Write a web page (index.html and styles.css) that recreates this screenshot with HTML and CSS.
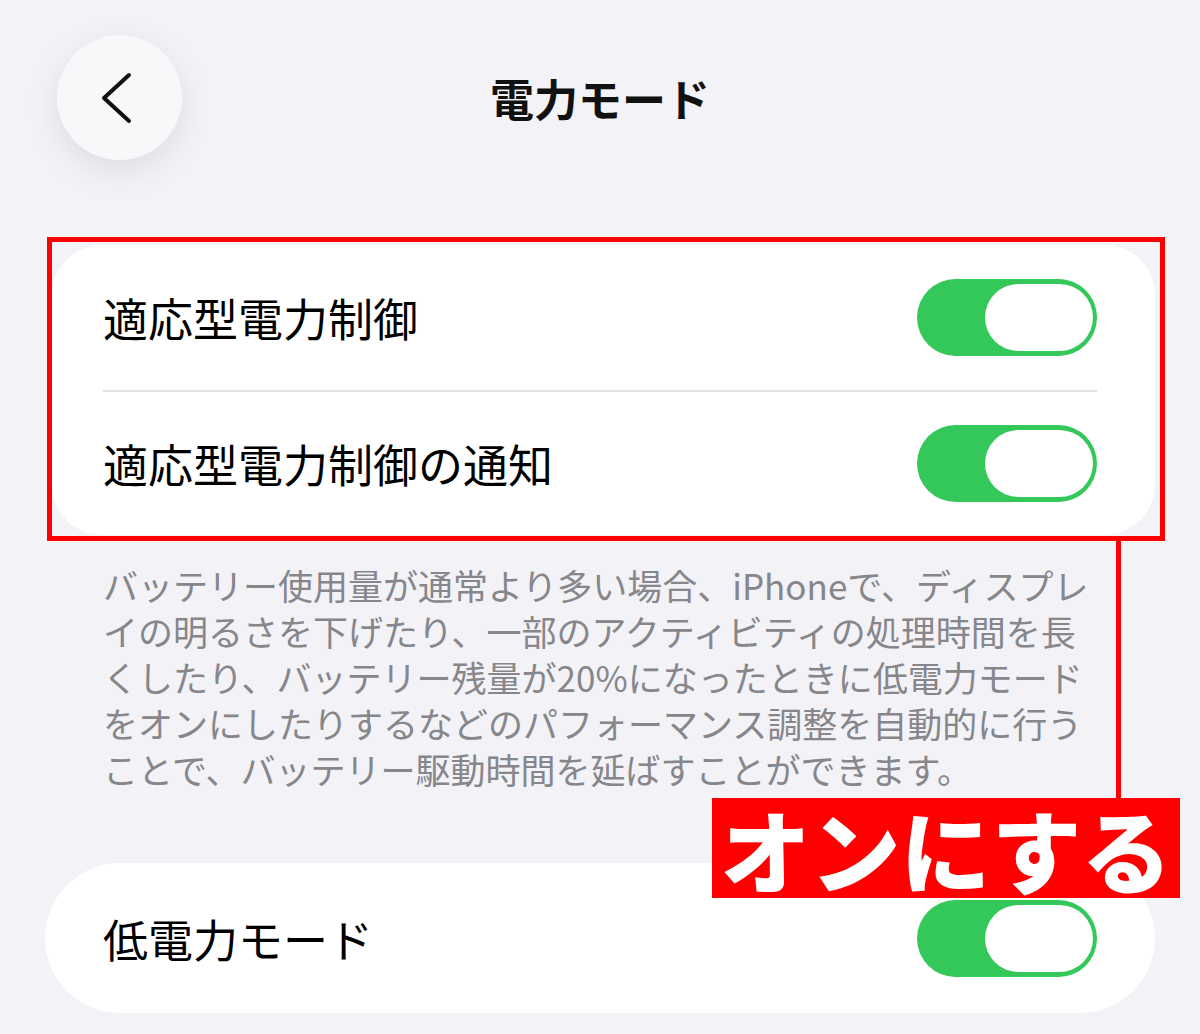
FILE: index.html
```html
<!DOCTYPE html>
<html lang="ja">
<head>
    <meta charset="UTF-8">
    <meta name="viewport" content="width=device-width, initial-scale=1.0">
    <title>電力モード</title>
    <link rel="stylesheet" href="styles.css">
</head>
<body>
    <header class="nav">
        <button class="back" aria-label="戻る">
            <svg width="40" height="52" viewBox="0 0 40 52">
                <path d="M33 3 L8 26 L33 49" fill="none" stroke="#111" stroke-width="4" stroke-linecap="round" stroke-linejoin="round"/>
            </svg>
        </button>
        <h1 class="title">電力モード</h1>
        <div></div>
    </header>

    <!-- highlighted group -->
    <div class="highlight">
        <div class="card">
            <div class="row">
                <span class="label">適応型電力制御</span>
                <span class="toggle on"><span class="knob"></span></span>
            </div>
            <div class="row">
                <span class="label">適応型電力制御の通知</span>
                <span class="toggle on"><span class="knob"></span></span>
            </div>
        </div>
    </div>

    <p class="footnote">
        バッテリー使用量が通常より多い場合、iPhoneで、ディスプレ<br>
        イの明るさを下げたり、一部のアクティビティの処理時間を長<br>
        くしたり、バッテリー残量が20%になったときに低電力モード<br>
        をオンにしたりするなどのパフォーマンス調整を自動的に行う<br>
        ことで、バッテリー駆動時間を延ばすことができます。
    </p>

    <div class="card pill">
        <div class="row">
            <span class="label">低電力モード</span>
            <span class="toggle on"><span class="knob"></span></span>
        </div>
    </div>

    <!-- annotation -->
    <div class="callout">
        <div class="callout-line"></div>
        <div class="callout-label">オンにする</div>
    </div>
</body>
</html>
```

FILE: styles.css
```css
body {
    margin: 0;
    background: #f2f2f7;
    font-family: "Noto Sans CJK JP", "Noto Sans", sans-serif;
    color: #000;
    position: relative;
    height: 1034px;
    overflow: hidden;
}

.nav {
    display: grid;
    grid-template-columns: 1fr auto 1fr;
    align-items: center;
    padding: 35px 57px 0 57px;
    height: 125px;
}

.back {
    width: 125px;
    height: 125px;
    border-radius: 50%;
    border: none;
    background: #f8f8fb;
    box-shadow: 0 10px 34px rgba(0, 0, 0, 0.09);
    display: flex;
    align-items: center;
    justify-content: center;
    padding: 0 8px 0 0;
    cursor: pointer;
}

.title {
    margin: 0;
    font-size: 44px;
    font-weight: 700;
    color: #111;
}

.highlight {
    margin: 77px 35px 0 47px;
    border: 5px solid #f00;
    padding: 3px 5px 1px 0;
}

.card {
    background: #fff;
    border-radius: 50px;
}

.row {
    display: flex;
    align-items: center;
    justify-content: space-between;
    height: 145px;
    margin: 0 58px 0 51px;
}

.highlight .row + .row {
    border-top: 2px solid #e3e3e6;
    height: 143px;
}

.label {
    font-size: 45px;
    line-height: 1;
}

.toggle {
    width: 180px;
    height: 77px;
    border-radius: 39px;
    background: #e5e5ea;
    display: flex;
    align-items: center;
    padding: 0 4px;
    box-sizing: border-box;
}

.toggle.on {
    background: #34c759;
    justify-content: flex-end;
}

.knob {
    width: 108px;
    height: 67px;
    border-radius: 34px;
    background: #fff;
}

.footnote {
    margin: 21px 0 0 103px;
    font-size: 35px;
    line-height: 46px;
    color: #86868b;
}

.card.pill {
    margin: 71px 45px 0 45px;
    border-radius: 75px;
}

.card.pill .row {
    height: 150px;
    margin: 0 58px;
}

.callout {
    position: absolute;
    top: 541px;
    left: 712px;
    width: 468px;
}

.callout-line {
    width: 5px;
    height: 257px;
    margin-left: 404px;
    background: #f00;
}

.callout-label {
    height: 100px;
    background: #f00;
    color: #fff;
    font-size: 90px;
    font-weight: 900;
    line-height: 100px;
    text-align: center;
}
```
